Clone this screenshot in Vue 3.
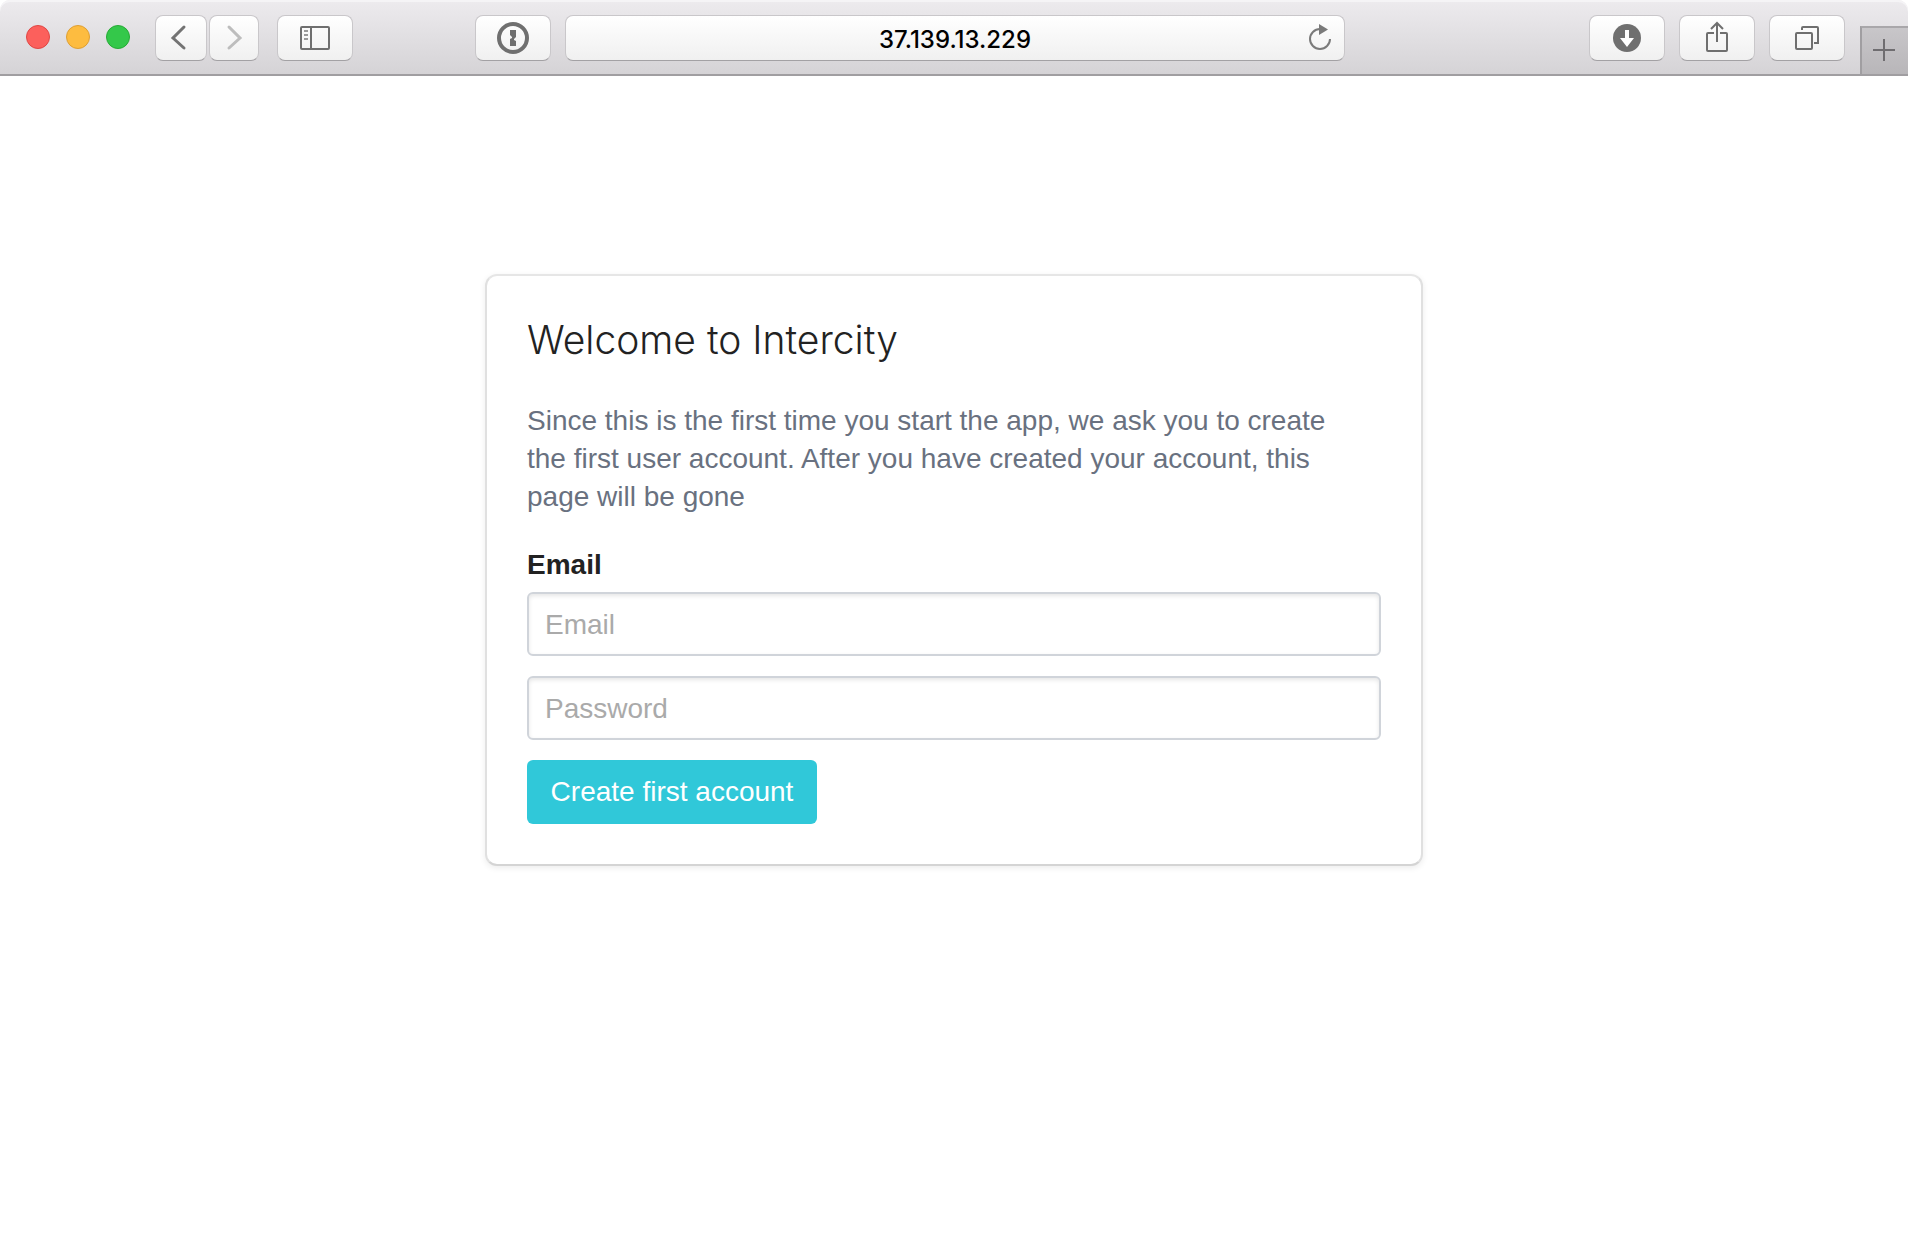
<script setup>
import { ref } from 'vue'

const address = ref('37.139.13.229')
const email = ref('')
const password = ref('')
</script>

<template>
  <div class="window">
    <header class="toolbar">
      <div class="lights">
        <button class="light close" type="button" aria-label="Close window"></button>
        <button class="light minimize" type="button" aria-label="Minimize window"></button>
        <button class="light expand" type="button" aria-label="Enter full screen"></button>
      </div>

      <nav class="history">
        <button class="tool back" type="button" aria-label="Back">
          <svg width="52" height="46" viewBox="0 0 52 46" fill="none" stroke="#737373" stroke-width="3" stroke-linecap="round"><path d="M29 12 18 23 29 33" /></svg>
        </button>
        <button class="tool forward" type="button" aria-label="Forward">
          <svg width="52" height="46" viewBox="0 0 52 46" fill="none" stroke="#bdbdbd" stroke-width="3" stroke-linecap="round"><path d="M21 12 32 23 21 33" /></svg>
        </button>
      </nav>

      <button class="tool sidebar-toggle" type="button" aria-label="Show sidebar">
        <svg width="76" height="46" viewBox="0 0 76 46" fill="none" stroke="#6f6f6f" stroke-width="2">
          <rect x="24" y="12" width="28" height="22" rx="1" />
          <path d="M34 12V34" />
          <path d="M27 16h4M27 20h4M27 24h4" stroke="#9a9a9a" />
        </svg>
      </button>

      <span class="spacer"></span>

      <button class="tool" type="button" aria-label="Password manager">
        <svg width="76" height="46" viewBox="0 0 76 46">
          <circle cx="38" cy="23" r="14" fill="none" stroke="#6f6f6f" stroke-width="4" />
          <path fill="#6f6f6f" d="M35 15h6v7l-2 2v1l2 1v5h-6v-7l2-1v-1l-2-2z" />
        </svg>
      </button>

      <div class="address">
        <input v-model="address" type="text" aria-label="Address" />
        <button class="reload" type="button" aria-label="Reload page">
          <svg width="26" height="28" viewBox="0 0 26 28">
            <path d="M13 5a10 10 0 1 0 10 10" fill="none" stroke="#7a7a7a" stroke-width="2" />
            <path d="M12 0v11l9-5.500z" fill="#7a7a7a" />
          </svg>
        </button>
      </div>

      <span class="spacer wide"></span>

      <div class="actions">
        <button class="tool" type="button" aria-label="Downloads">
          <svg width="76" height="46" viewBox="0 0 76 46">
            <circle cx="38" cy="23" r="14" fill="#6f6f6f" />
            <path fill="#fff" d="M36 15h4v8h5l-7 9-7-9h5z" />
          </svg>
        </button>
        <button class="tool" type="button" aria-label="Share">
          <svg width="76" height="46" viewBox="0 0 76 46" fill="none" stroke="#6f6f6f" stroke-width="2">
            <path d="M35 18h-6q-1 0-1 1v16q0 1 1 1h18q1 0 1-1V19q0-1-1-1h-6" />
            <path d="M38 27V9M32 14l6-6 6 6" />
          </svg>
        </button>
        <button class="tool" type="button" aria-label="Show all tabs">
          <svg width="76" height="46" viewBox="0 0 76 46" fill="none" stroke="#6f6f6f" stroke-width="2">
            <rect x="27" y="18" width="16" height="16" rx="1" />
            <path d="M33 15v-2q0-1 1-1h14q1 0 1 1v15h-4" />
          </svg>
        </button>
      </div>

      <button class="new-tab" type="button" aria-label="New tab">
        <svg width="46" height="46" viewBox="0 0 46 46" stroke="#6f6d70" stroke-width="2"><path d="M11 22h22M22 11v22" /></svg>
      </button>
    </header>

    <main class="page">
      <form class="card" @submit.prevent>
        <h1>Welcome to Intercity</h1>
        <p>
          Since this is the first time you start the app, we ask you to create the first user account. After you have
          created your account, this page will be gone
        </p>
        <label for="email">Email</label>
        <input id="email" v-model="email" class="field" type="email" placeholder="Email" />
        <input v-model="password" class="field" type="password" placeholder="Password" aria-label="Password" />
        <button class="submit" type="submit">Create first account</button>
      </form>
    </main>
  </div>
</template>

<style>
body {
  margin: 0;
  background: #fff;
}
</style>

<style scoped>
.window {
  font-family: "Liberation Sans", Arial, sans-serif;
}

.window * {
  box-sizing: border-box;
}

button,
input {
  margin: 0;
  padding: 0;
  border: 0;
  font: inherit;
}

svg {
  display: block;
  flex: none;
}

.toolbar {
  display: flex;
  align-items: flex-start;
  height: 76px;
  padding: 15px 0 0 26px;
  border-bottom: 2px solid #a09ea1;
  border-radius: 10px 10px 0 0;
  background: linear-gradient(#edebee, #d5d3d6);
  box-shadow: inset 0 2px 0 #f5f4f6;
}

.lights {
  display: flex;
  gap: 16px;
  margin: 10px 25px 0 0;
}

.light {
  width: 24px;
  height: 24px;
  border: 1px solid;
  border-radius: 50%;
}

.close {
  background: #fc605c;
  border-color: #df4744;
}

.minimize {
  background: #fdbc40;
  border-color: #de9f34;
}

.expand {
  background: #34c84a;
  border-color: #27aa35;
}

.history {
  display: flex;
  gap: 2px;
}

.tool,
.address {
  height: 46px;
  border: 1px solid #c9c7ca;
  border-bottom-color: #a3a1a4;
  border-radius: 8px;
  background: linear-gradient(#fff, #f0f0f0);
}

.tool {
  display: flex;
  flex: none;
  align-items: center;
  justify-content: center;
  width: 76px;
}

.back {
  width: 52px;
}

.forward {
  width: 50px;
}

.sidebar-toggle {
  margin-left: 18px;
}

.spacer {
  flex: 1;
}

.wide {
  flex: 2;
}

.address {
  display: flex;
  flex: 0 1 780px;
  align-items: center;
  margin-left: 14px;
  padding: 0 11px 0 37px;
}

.address input {
  flex: 1;
  min-width: 0;
  height: 44px;
  padding-top: 2px;
  background: transparent;
  color: #000;
  font-family: Inter, sans-serif;
  font-size: 24px;
  font-weight: 500;
  text-align: center;
}

.reload {
  background: transparent;
}

.actions {
  display: flex;
  gap: 14px;
}

.new-tab {
  width: 48px;
  height: 48px;
  margin: 11px 0 0 15px;
  border-top: 2px solid #a9a7aa;
  border-left: 2px solid #a09ea1;
  background: linear-gradient(#c8c6c9, #b8b6b9);
}

.page {
  display: flex;
  justify-content: center;
  padding: 198px 20px 40px;
}

.card {
  display: flex;
  flex-direction: column;
  width: 100%;
  max-width: 938px;
  padding: 40px;
  border: 2px solid #e0e0e0;
  border-top-color: #e6e6e6;
  border-bottom-color: #d4d4d4;
  border-radius: 12px;
  background: #fff;
  box-shadow: 0 2px 6px rgba(0, 0, 0, 0.08);
  color: #222;
  font-size: 28px;
  line-height: 38px;
}

h1 {
  margin: 0 0 38px;
  font-family: Inter, sans-serif;
  font-size: 39px;
  font-weight: 300;
  line-height: 48px;
}

p {
  margin: 0 0 30px;
  padding-right: 24px;
  color: #697180;
}

label {
  margin-bottom: 8px;
  font-weight: 700;
}

.field {
  width: 100%;
  height: 64px;
  margin-bottom: 20px;
  padding: 2px 16px 0;
  border: 2px solid #d0d4da;
  border-radius: 6px;
  background: #fff;
  box-shadow: inset 0 2px 4px rgba(0, 0, 0, 0.1);
  color: #222;
}

.field::placeholder {
  color: #aaa;
  opacity: 1;
}

.submit {
  align-self: flex-start;
  min-width: 290px;
  height: 64px;
  padding: 0 22px;
  border-radius: 6px;
  background: #30c8d9;
  color: #fff;
}
</style>
